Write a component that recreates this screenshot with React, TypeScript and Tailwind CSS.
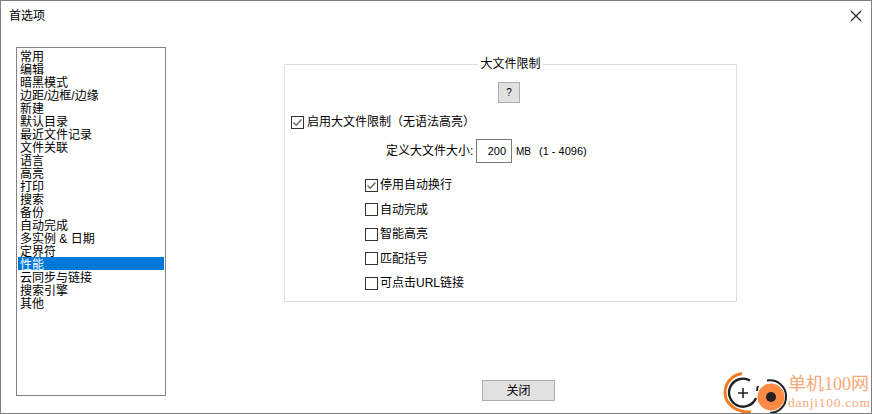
const items = [
  "常用",
  "编辑",
  "暗黑模式",
  "边距/边框/边缘",
  "新建",
  "默认目录",
  "最近文件记录",
  "文件关联",
  "语言",
  "高亮",
  "打印",
  "搜索",
  "备份",
  "自动完成",
  "多实例 & 日期",
  "定界符",
  "性能",
  "云同步与链接",
  "搜索引擎",
  "其他",
]

const options = [
  { label: "停用自动换行", checked: true },
  { label: "自动完成", checked: false },
  { label: "智能高亮", checked: false },
  { label: "匹配括号", checked: false },
  { label: "可点击URL链接", checked: false },
]

function Checkbox({ checked }: { checked: boolean }) {
  return (
    <span className="w-[13px] h-[13px] shrink-0 border border-[#333333] bg-white flex items-center justify-center">
      {checked && (
        <svg width="11" height="11" viewBox="0 0 11 11" fill="none">
          <path d="M1.5 5.5 L4.2 8.2 L9.5 2.5" stroke="#666666" strokeWidth="1.4" />
        </svg>
      )}
    </span>
  )
}

function Watermark() {
  return (
    <div className="absolute left-[722px] top-[370px] flex items-start gap-[1px]">
      <svg width="64" height="43" viewBox="0 0 64 43" fill="none">
        <path d="M19 2.5 C9 4 2 12 2 22 C2 33 14 42 28 41" stroke="#f47a1c" strokeWidth="3" />
        <path d="M27 9.5 A14 14 0 1 0 33 27" stroke="#222222" strokeWidth="2.4" />
        <path d="M15 22 H25 M20 17 V27" stroke="#222222" strokeWidth="1.6" />
        <circle cx="48" cy="26" r="13.5" fill="#ff8a45" />
        <path d="M44 9.5 A16 16 0 0 1 63 26 A16 16 0 0 1 47 42" stroke="#222222" strokeWidth="2" />
        <path d="M35 15 A15 15 0 0 0 34 20" stroke="#222222" strokeWidth="2" />
        <circle cx="48" cy="26" r="5" fill="#222222" />
      </svg>
      <div className="mt-[2px] flex flex-col font-['Liberation_Serif','Noto_Sans_CJK_SC',serif] text-[#f9a878] leading-none">
        <span className="text-[18px] leading-[22px] whitespace-nowrap">单机100网</span>
        <span className="text-[13.5px] leading-[16px] tracking-[0.75px] whitespace-nowrap">danji100.com</span>
      </div>
    </div>
  )
}

export default function App() {
  return (
    <div className="relative w-[872px] h-[414px] overflow-hidden bg-white border border-[#7f7f7f] flex flex-col text-[12px] text-black font-['Liberation_Sans','Noto_Sans_CJK_SC',sans-serif]">
      <div className="h-[29px] shrink-0 flex items-center justify-between pl-[8px] pr-[9px]">
        <span className="leading-[30px]">首选项</span>
        <svg width="12" height="12" viewBox="0 0 12 12" fill="none">
          <path d="M1 1 L11 11 M11 1 L1 11" stroke="#222222" strokeWidth="1.1" />
        </svg>
      </div>

      <div className="flex items-start pl-[15px]">
        <div className="mt-[17px] w-[150px] h-[349px] shrink-0 border border-[#82828b] pt-[1px] px-[1px]">
          {items.map((item) => (
            <div
              key={item}
              className={
                item === "性能"
                  ? "h-[13px] leading-[17px] pl-[2px] bg-[#0078d7] text-white whitespace-pre"
                  : "h-[13px] leading-[17px] pl-[2px] whitespace-pre"
              }
            >
              {item}
            </div>
          ))}
        </div>

        <fieldset className="ml-[118px] mt-[27px] w-[453px] h-[245px] border border-[#dcdcdc] flex flex-col px-[6px]">
          <legend className="mx-auto px-[2px] leading-[14px]">大文件限制</legend>
          <button className="mt-[11px] ml-[207px] w-[22px] h-[21px] bg-[#e1e1e1] border border-[#adadad] text-[10px] leading-none">
            ?
          </button>
          <label className="mt-[12px] flex items-center gap-[3px] h-[14px]">
            <Checkbox checked />
            <span>启用大文件限制（无语法高亮）</span>
          </label>
          <div className="mt-[10px] ml-[95px] flex items-center h-[24px]">
            <span className="w-[90px]">定义大文件大小:</span>
            <div className="w-[36px] h-[24px] border border-[#7a7a7a] flex items-center justify-end pr-[5px] text-[11px]">
              200
            </div>
            <span className="ml-[4px] text-[10px]">MB</span>
            <span className="ml-[8px] text-[11px]">(1 - 4096)</span>
          </div>
          <div className="mt-[15px] ml-[74px] flex flex-col gap-[10.5px]">
            {options.map((option) => (
              <label key={option.label} className="flex items-center gap-[2px] h-[14px]">
                <Checkbox checked={option.checked} />
                <span>{option.label}</span>
              </label>
            ))}
          </div>
        </fieldset>
      </div>

      <div className="mt-[-16px] ml-[481px]">
        <button className="w-[73px] h-[21px] bg-[#e1e1e1] border border-[#adadad] leading-none">关闭</button>
      </div>

      <Watermark />
    </div>
  )
}
